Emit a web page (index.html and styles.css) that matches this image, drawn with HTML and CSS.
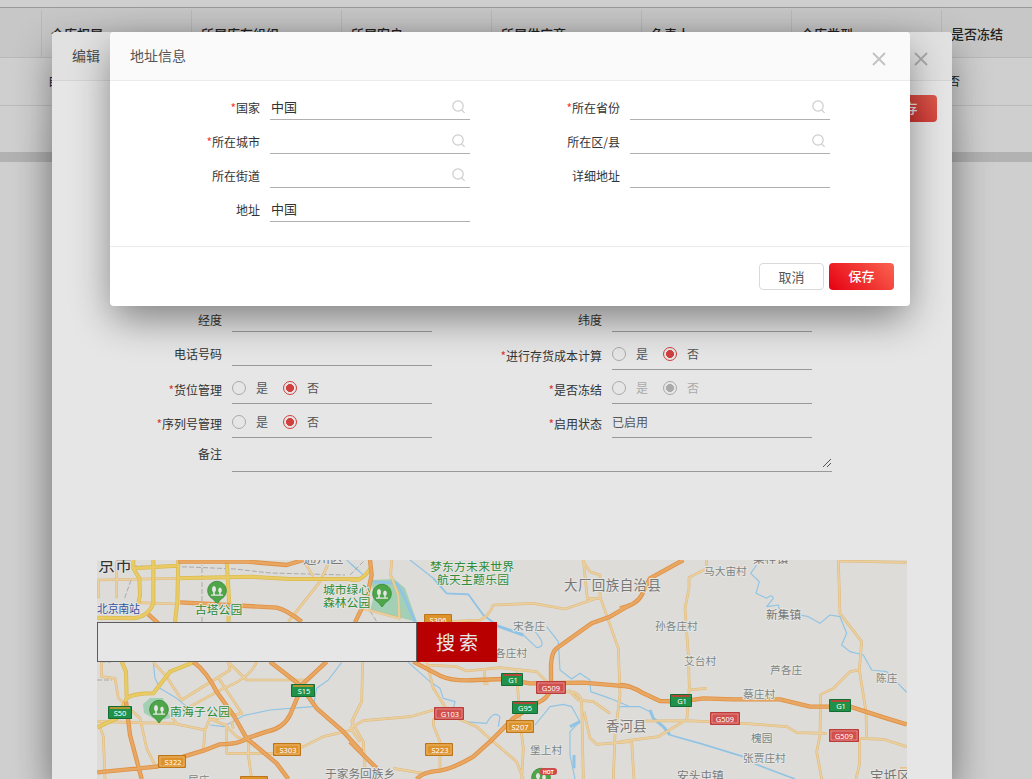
FILE: index.html
```html
<!DOCTYPE html>
<html lang="zh-CN">
<head>
<meta charset="utf-8">
<title>地址信息</title>
<link rel="stylesheet" href="styles.css">
</head>
<body>
<svg class="defs" width="0" height="0">
  <symbol id="search" viewBox="0 0 14 14"><circle cx="6" cy="6" r="5.2"/><path d="M9.6 9.8L12.6 12.8"/></symbol>
  <symbol id="close" viewBox="0 0 14 14"><path d="M1 1L13 13M13 1L1 13"/></symbol>
</svg>

<div class="table">
  <div class="thead">
    <div class="th first"></div><div class="th">仓库权属</div><div class="th">所属库存组织</div><div class="th">所属客户</div><div class="th">所属供应商</div><div class="th">负责人</div><div class="th">仓库类型</div><div class="th last">是否冻结</div>
  </div>
  <div class="trow"><span class="cell-own">自有</span><span class="cell-frozen">否</span></div>
  <div class="scrollbar"></div>
</div>

<section class="modal edit">
  <header class="modal-head"><span>编辑</span><svg class="close"><use href="#close"/></svg></header>
  <div class="toolbar"><button class="btn primary">保存</button></div>
  <div class="edit-form">
    <div class="item"><label>经度</label><div class="field"></div></div>
    <div class="item"><label>纬度</label><div class="field"></div></div>
    <div class="item"><label>电话号码</label><div class="field"></div></div>
    <div class="item radio-item lowered"><label><i>*</i>进行存货成本计算</label><div class="field"><b class="radio"></b><span>是</span><b class="radio on"></b><span>否</span></div></div>
    <div class="item radio-item"><label><i>*</i>货位管理</label><div class="field"><b class="radio"></b><span>是</span><b class="radio on"></b><span>否</span></div></div>
    <div class="item radio-item disabled"><label><i>*</i>是否冻结</label><div class="field"><b class="radio"></b><span>是</span><b class="radio on"></b><span>否</span></div></div>
    <div class="item radio-item"><label><i>*</i>序列号管理</label><div class="field"><b class="radio"></b><span>是</span><b class="radio on"></b><span>否</span></div></div>
    <div class="item radio-item"><label><i>*</i>启用状态</label><div class="field">已启用</div></div>
    <div class="item remark"><label>备注</label><div class="field"><svg class="grip" viewBox="0 0 10 10"><path d="M1 9L9 1M5 9L9 5"/></svg></div></div>
  </div>

  <div class="map">
    <svg class="map-canvas" viewBox="97 560 810 219">
      <defs>
        <g id="minor">
          <g transform="translate(90 555) scale(.33333)"><path d="M22 75L260 70M150 143L265 147M25 75V130M80 15V130M35 320V365L75 370L85 430L150 490L170 580L200 640M22 500L250 505L345 525L360 490M30 515L40 545L45 672M190 322L230 365L275 435L420 345L415 322L470 375H650M500 320Q480 370 400 400L290 460L240 480L260 505M385 368L455 475L360 495M345 525L340 590M410 505V595H550L640 575L700 545L785 525L790 490L810 450M355 490L405 510L440 545L475 560V600L485 672M425 500L430 520M785 525L810 560M595 200L690 80L720 15M640 15L670 65"/></g>
          <g transform="translate(350 555) scale(.33333)"><path d="M125 15L122 60L145 120L148 190L35 160M300 200L390 195Q415 185 430 150L550 145L645 162L740 130M700 15L712 130H750M700 20L720 50L750 60V125L805 280L810 420L795 540L790 672M38 320L35 440L5 500L40 560L45 640M0 520L40 497L180 485L250 465M230 320L250 400L285 455L300 480L380 515L430 560L500 620L520 672M230 330L320 335L350 348L450 338L560 350L600 390M403 340V385H415M500 345L508 480L520 580L515 672M250 490L250 510L270 560V650M130 640L220 655M650 410Q690 410 695 440L700 672M655 405L685 435L730 440L780 475M702 470L720 550L740 568L840 560"/></g>
          <g transform="translate(620 555) scale(.33333)"><path d="M260 15V40L207 68L207 100L195 160L205 300L208 400L200 500M203 405L260 400M655 15L660 175L725 260L718 345L690 350L640 400L602 418L600 540L590 590L605 672M655 18L860 22M718 345L738 470L740 548M70 498L200 497L370 505L500 515L530 533L620 535M0 560L115 545L190 500M35 560L42 672M720 550L790 553L860 575M718 550V630L708 672M840 640H860"/></g>
        </g>
        <g id="main">
          <g transform="translate(90 555) scale(.33333)"><path d="M22 188L130 190Q175 185 190 145V15M130 15V40L148 70L150 120L145 145M265 15L262 140L255 200M410 15L418 150L415 200M260 70L480 65L600 72H810M130 40L260 32M95 320L108 350L110 430M22 517L80 490L110 430Q130 415 190 415L240 350L310 322"/></g>
          <g transform="translate(350 555) scale(.33333)"><path d="M0 74H25Q45 65 62 40"/></g>
        </g>
        <g id="highway">
          <g transform="translate(90 555) scale(.33333)"><path d="M265 20H470L590 30L640 15M270 142L560 158Q590 165 635 200M175 178L205 205M310 320Q350 350 380 410L430 480L470 550L560 625L595 672M540 320L630 390L680 460L760 530L815 590M710 320L640 385L600 480Q580 520 530 530L470 550Q450 567 390 568L340 587L280 605L200 635L22 652M108 440L120 540L155 672"/></g>
          <g transform="translate(350 555) scale(.33333)"><path d="M60 15L65 60L50 130L15 202M190 320L270 362Q310 380 380 375L460 372L540 385L700 383L840 395M840 150L780 185L725 205L620 280Q605 290 603 330V400Q595 430 560 445L490 490L420 560L370 605Q310 640 270 647Q220 650 200 672M0 560L80 640"/></g>
          <g transform="translate(620 555) scale(.33333)"><path d="M0 160Q50 150 65 120L90 70L190 15M0 390Q30 390 70 415L120 438L180 440L250 430L340 433H480L570 455H690L800 490L860 508"/></g>
        </g>
        <g id="pin"><path d="M0 13L-4 8A9.3 9.3 0 1 1 4 8Z"/><path class="tree" d="M-3-5a2.3 3.2 0 0 1 .8 6V4h-1.6V1a2.3 3.2 0 0 1 .8-6zM3-3.5a2 2.8 0 0 1 .7 5.3V4H2.300V1.800A2 2.800 0 0 1 3-3.500zM-6 3.500H6V4.700H-6z"/></g>
      </defs>
      <rect class="land" x="97" y="560" width="810" height="219"/>
      <path class="park" d="M371 580L394 579L405 588L417 622L370 610L374 596ZM143 704L150 698L163 698L170 718L158 721L144 713Z"/>
      <g class="water">
        <g transform="translate(90 555) scale(.33333)"><path d="M770 15L810 50M190 322L195 370L210 400L260 430L290 455M755 322L715 375L680 400L670 455L600 460L540 465L460 482L400 515L360 510"/></g>
        <g transform="translate(350 555) scale(.33333)"><path d="M0 25L40 60M180 15L250 70L290 115L355 118L400 180L440 210L520 240L560 278Q595 275 555 230M590 215L625 260L630 345L665 372L690 355L720 375L722 410L780 430L840 455M175 322L240 380L270 400L280 430L315 440L310 460M340 500L410 505Q430 465 450 485L445 515M555 510L600 455L640 448L665 455L690 500L660 530V600L675 672"/><path class="mid" d="M250 70L290 115L355 118L400 180L440 210"/><path class="wide" d="M70 80L140 85L160 120L195 200M440 212L520 240M660 515L690 500M672 600V640"/></g>
        <g transform="translate(620 555) scale(.33333)"><path d="M0 455L60 455L90 470M410 30L392 55L418 80L408 115L440 130Q455 115 460 130L440 155L475 150L480 170M540 180L565 185L600 205L630 180L660 185L680 235L665 270L690 290L730 300L755 345L800 350L860 412"/><path class="wide" d="M90 465L100 490L130 515L150 540"/><path class="mid" d="M150 540L240 565L370 605M400 625L525 672"/></g>
      </g>
      <path class="rail" d="M133 566L190 567L235 569L270 573L345 575M202 622V565M131 580L124 600M350 575L364 561M370 611L377 622M97 680H112M100 662H111"/>
      <use href="#minor" class="minor-case"/><use href="#minor" class="minor-fill"/>
      <use href="#main" class="main-case"/><use href="#main" class="main-fill"/>
      <use href="#highway" class="hw-case"/><use href="#highway" class="hw-fill"/>

      <use href="#pin" class="pin" x="217" y="591"/><use href="#pin" class="pin" x="159" y="710"/><use href="#pin" class="pin" x="382" y="594"/><use href="#pin" class="pin" x="541" y="778"/>
      <rect x="540" y="768" width="17" height="7" rx="3" fill="#cf4a4a"/><text class="hot" x="543" y="773.500">HOT</text>

      <g class="badge green"><rect x="108.500" y="706.500" width="23" height="12"/><rect x="291.500" y="684.500" width="23" height="12"/><rect x="501.500" y="673.500" width="21" height="12"/><rect x="512.500" y="701.500" width="25" height="12"/><rect x="670.500" y="694.500" width="21" height="12"/><rect x="829.500" y="699.500" width="21" height="12"/></g>
      <path class="band" d="M110 708H130M293 686H313"/>
      <path class="band red-band" d="M503 675H521M514 703H536M672 696H690M831 701H849"/>
      <g class="badge red"><rect x="434.500" y="707.500" width="29" height="12"/><rect x="536.500" y="681.500" width="29" height="12"/><rect x="710.500" y="712.500" width="29" height="12"/><rect x="829.500" y="729.500" width="29" height="12"/></g>
      <g class="badge orange"><rect x="158.500" y="755.500" width="27" height="12"/><rect x="273.500" y="743.500" width="27" height="12"/><rect x="424.500" y="614.500" width="27" height="12"/><rect x="425.500" y="743.500" width="27" height="12"/><rect x="506.500" y="720.500" width="27" height="12"/><rect x="240.500" y="776.500" width="27" height="12"/></g>
      <path class="inlay" d="M436 709h26v9h-26zM538 683h26v9h-26zM712 714h26v9h-26zM831 731h26v9h-26zM160 757h24v9h-24zM275 745h24v9h-24zM427 745h24v9h-24zM508 722h24v9h-24z"/>
      <g class="badge-text"><text x="120" y="715.500">S50</text><text x="304" y="694">S15</text><text x="513" y="683">G1</text><text x="525" y="710.500">G95</text><text x="682" y="704">G1</text><text x="841" y="709">G1</text><text x="450" y="716.500">G103</text><text x="551" y="690.500">G509</text><text x="725" y="721.500">G509</text><text x="844" y="739">G509</text><text x="173" y="764.500">S322</text><text x="288" y="752.500">S303</text><text x="438" y="623">S306</text><text x="440" y="752.500">S223</text><text x="520" y="730">S207</text></g>

      <g class="place">
        <text class="city" x="98" y="571">京市</text><text class="station" x="97" y="613" textLength="43">北京南站</text>
        <text class="big" x="303" y="563">通州区</text><text class="big" x="564" y="590" textLength="97">大厂回族自治县</text><text class="big" x="606" y="731">香河县</text>
        <text class="town" x="753" y="563">渠梓镇</text><text x="704" y="575">马大宙村</text><text class="town" x="766" y="618.500">新集镇</text><text x="655" y="629.500">孙各庄村</text><text x="513" y="629.500">宋各庄</text><text x="495" y="657">各庄村</text><text x="684" y="664.500">艾台村</text><text x="770" y="673.500">芦各庄</text><text x="876" y="682">陈庄</text><text x="743" y="698">蔡庄村</text><text x="751" y="742">槐园</text><text x="743" y="762">张贾庄村</text><text x="530" y="753.500">堡上村</text><text class="town" x="677" y="779.500">安头屯镇</text><text class="big" x="870" y="780.500">宝坻区</text><text class="town" x="325" y="778">于家务回族乡</text><text x="188" y="784">屈庄</text>
        <g class="green-name"><text x="195" y="614">古塔公园</text><text x="170" y="716" textLength="60">南海子公园</text><text x="323" y="594">城市绿心</text><text x="323" y="607">森林公园</text><text x="430" y="571" textLength="84">梦东方未来世界</text><text x="437" y="584" textLength="72">航天主题乐园</text></g>
      </g>
    </svg>
    <div class="map-search"><input type="text"><button>搜索</button></div>
  </div>
</section>

<section class="modal address">
  <header class="modal-head"><span>地址信息</span><svg class="close"><use href="#close"/></svg></header>
  <div class="address-form">
    <div class="item"><label><i>*</i>国家</label><div class="field">中国<svg class="lookup"><use href="#search"/></svg></div></div>
    <div class="item"><label><i>*</i>所在省份</label><div class="field"><svg class="lookup"><use href="#search"/></svg></div></div>
    <div class="item"><label><i>*</i>所在城市</label><div class="field"><svg class="lookup"><use href="#search"/></svg></div></div>
    <div class="item"><label>所在区/县</label><div class="field"><svg class="lookup"><use href="#search"/></svg></div></div>
    <div class="item"><label>所在街道</label><div class="field"><svg class="lookup"><use href="#search"/></svg></div></div>
    <div class="item"><label>详细地址</label><div class="field"></div></div>
    <div class="item"><label>地址</label><div class="field">中国</div></div>
  </div>
  <footer class="modal-foot"><button class="btn">取消</button><button class="btn primary">保存</button></footer>
</section>
</body>
</html>
```
FILE: styles.css
```css
* { box-sizing: border-box; }
html { overflow: hidden; }
body { margin: 0; height: 779px; overflow: hidden; position: relative; background: #cfcfcf; color: #333; font: 12px/16px "Noto Sans CJK SC", sans-serif; }
button, input { font-family: inherit; margin: 0; padding: 0; }
i { font-style: normal; color: #f33; }
.defs { position: absolute; }

/* table behind the dialogs */
.table { padding-top: 7px; }
.thead { display: flex; height: 51px; background: #c7c7c7; border-top: 1px solid #999; border-bottom: 1px solid #b9b9b9; padding-top: 2px; }
.th { flex: none; width: 150px; padding: 14px 0 0 9px; line-height: 20px; border-right: 1px solid #b9b9b9; font-size: 13px; font-weight: 500; color: #222; }
.th.first { width: 42px; }
.th.last { width: 90px; border-right: 0; }
.trow { display: flex; justify-content: space-between; height: 48px; padding: 15px 72px 0 48px; border-bottom: 1px solid #bbb; color: #222; }
.scrollbar { margin-top: 46px; height: 10px; background: #b2b2b2; }

/* dialogs */
.modal { position: absolute; top: 32px; border-radius: 4px; box-shadow: 0 15px 40px -3px rgba(0,0,0,.46); }
.edit { left: 52px; width: 900px; height: 747px; background: #e6e6e6; border-radius: 4px 4px 0 0; box-shadow: 0 15px 40px -3px rgba(0,0,0,.46), 0 100px 40px -3px rgba(0,0,0,.12); }
.address { left: 110px; width: 800px; height: 274px; background: #fff; }
.modal-head { display: flex; justify-content: space-between; height: 49px; padding: 13px 24px 0 20px; font-size: 14px; line-height: 20px; color: #555; background: #fafafa; border-bottom: 1px solid #ececec; border-radius: 4px 4px 0 0; }
.edit .modal-head { background: #e1e1e1; border-color: #d5d5d5; color: #4c4c4c; }
.close { width: 14px; height: 14px; margin-top: 7px; stroke: #c2c2c2; stroke-width: 1.8; fill: none; }
.edit .close { stroke: #aaa; }
.btn { width: 65px; height: 27px; border: 1px solid #d9d9d9; border-radius: 4px; background: #fff; color: #555; font-size: 13px; line-height: 25px; }
.btn.primary { border: 0; padding-bottom: 2px; color: #fff; font-weight: 500; background: linear-gradient(45deg, #e60012, #fa6450); }
.toolbar { display: flex; justify-content: flex-end; padding: 14px 15px 0; height: 217px; }
.toolbar .primary { background: linear-gradient(45deg, #c4181f, #dc5a4c); color: #e6e6e6; }

.item { display: flex; gap: 10px; }
.item label { flex: none; text-align: right; white-space: nowrap; }
.field { flex: none; width: 200px; height: 34px; border-bottom: 1px solid #999; }
.edit i { color: #d93636; }

.edit-form { display: grid; grid-template-columns: 380px 380px; grid-template-rows: 34px 38px 34px 34px 34px; }
.edit-form label { width: 170px; padding-top: 14px; }
.edit-form .radio-item label { padding-top: 12px; }
.radio-item .field { display: flex; align-items: flex-start; padding-top: 10px; color: #555; }
.lowered { padding-top: 4px; }
.radio { width: 14px; height: 14px; margin: 1px 10px 0 0; border: 1px solid #aaa; border-radius: 50%; }
.field span { width: 12px; margin-right: 15px; }
.radio.on { border-color: #d0403e; background: radial-gradient(circle, #d0403e 0 3.700px, transparent 4.300px); }
.disabled .field { color: #aaa; }
.disabled .radio.on { border-color: #aaa; background: radial-gradient(circle, #aaa 0 3.700px, transparent 4.300px); }
.remark { grid-column: 1 / 3; }
.edit-form .remark label { padding-top: 8px; }
.remark .field { width: 600px; display: flex; justify-content: flex-end; align-items: flex-end; padding-bottom: 3px; }
.grip { width: 10px; height: 10px; stroke: #555; stroke-width: 1; fill: none; }

.address-form { display: grid; grid-template-columns: 360px 360px; grid-auto-rows: 34px; height: 165px; padding-top: 5px; }
.address-form label { width: 150px; padding-top: 14px; }
.address-form .field { display: flex; justify-content: space-between; padding: 12px 4px 0 1px; font-size: 13px; border-color: #b0b0b0; line-height: 18px; }
.lookup { width: 14px; height: 14px; margin: 2px 0 0 auto; stroke: #ccc; stroke-width: 1.2; fill: none; }
.modal-foot { display: flex; justify-content: flex-end; gap: 5px; padding: 16px 16px 0; border-top: 1px solid #ececec; }

/* map */
.map { position: relative; margin: 88px 45px 0; height: 219px; }
.map-canvas { display: block; width: 810px; height: 219px; overflow: hidden; stroke-linejoin: round; fill: none; }
.land { fill: #dddcd9; }
.park { fill: #a3d0b4; }
.water { stroke: #91c4e4; stroke-width: 3.500; }
.water .mid { stroke-width: 5; }
.water .wide { stroke-width: 9; }
.rail { stroke: #aaa; stroke-width: 1; stroke-dasharray: 5 2; }
.minor-case { stroke: #e0b878; stroke-width: 8; }
.minor-fill { stroke: #ead0a0; stroke-width: 5; }
.main-case { stroke: #dcb84c; stroke-width: 12; }
.main-fill { stroke: #e8cb65; stroke-width: 8; }
.hw-case { stroke: #df9143; stroke-width: 13; }
.hw-fill { stroke: #e9a764; stroke-width: 8; }
.pin { fill: #4fa64a; stroke: #348a34; stroke-width: .8; }
.tree { fill: #e6e6e6; stroke: none; }
.badge rect { stroke-width: 1; }
.green { fill: #1f9148; stroke: #136c35; }
.red { fill: #d14f4c; stroke: #b93c39; }
.orange { fill: #dd922a; stroke: #bd751a; }
.inlay { stroke: #fff; stroke-opacity: .4; stroke-width: .8; }
.band { stroke: #e09a2a; stroke-width: 1.500; }
.red-band { stroke: #d33; }
.badge-text { font: 7.500px "Noto Sans", sans-serif; fill: #fff; text-anchor: middle; }
.hot { font: bold 5px Inter, sans-serif; fill: #fff; }
.place { font-size: 10.700px; fill: #7b8585; stroke: #e6e5e2; stroke-width: 2; paint-order: stroke; }
.big { font-size: 13.500px; fill: #777; }
.town { font-size: 11.700px; fill: #777; }
.city { font-size: 17px; fill: #333; }
.station { font-size: 11px; fill: #3553a0; }
.green-name { font-size: 11.800px; fill: #2f8c38; }
.map-search { position: absolute; top: 62px; left: 0; display: flex; }
.map-search input { width: 320px; height: 40px; border: 1px solid #5c5c5c; background: #e6e6e6; }
.map-search button { width: 80px; height: 40px; border: 0; background: #b80000; color: #e6e6e6; font-size: 19px; letter-spacing: 4px; padding: 0 0 2px 4px; }
```
